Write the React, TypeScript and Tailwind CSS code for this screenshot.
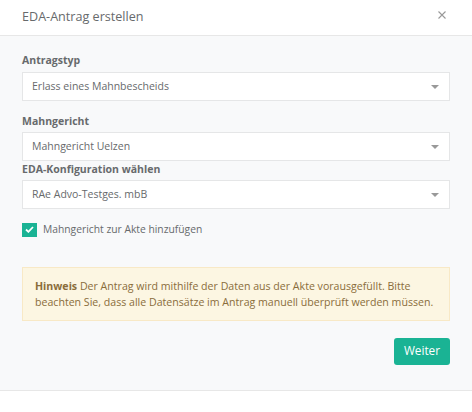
function SelectBox({ value }: { value: string }) {
  return (
    <div className="flex h-[29px] items-center justify-between border border-[#e5e6e7] bg-white pl-[9px] pr-[10px]">
      <span className="text-[10.5px] text-[#676a6c]">{value}</span>
      <svg width="8" height="4" viewBox="0 0 8 4" className="text-[#999]">
        <path d="M0 0h8L4 4z" fill="currentColor" />
      </svg>
    </div>
  );
}

export default function App() {
  return (
    <div className="w-[472px] h-[412px] bg-white font-['Open_Sans',sans-serif]">
      {/* Header */}
      <div className="flex h-9 items-center justify-between border-b border-[#e7e7e7] pl-[22px] pr-[26px]">
        <h1 className="text-[12.6px] text-[#676a6c]">EDA-Antrag erstellen</h1>
        <svg width="8" height="8" viewBox="0 0 8 8" className="mb-[5px] text-[#999]">
          <path d="M0.5 0.5l7 7M7.5 0.5l-7 7" stroke="currentColor" strokeWidth="1.1" />
        </svg>
      </div>

      {/* Body */}
      <div className="border-b border-[#e7e7e7] bg-[#f8f9fa] px-[22px] pt-[17px] pb-[25px]">
        <label className="mb-[5px] block text-[10.5px] leading-[14px] font-bold text-[#676a6c]">Antragstyp</label>
        <SelectBox value="Erlass eines Mahnbescheids" />

        <label className="mt-[13px] mb-[4px] block text-[10.5px] leading-[14px] font-bold text-[#676a6c]">Mahngericht</label>
        <SelectBox value="Mahngericht Uelzen" />

        <label className="mt-[1px] mb-[4px] block text-[10.5px] leading-[14px] font-bold text-[#676a6c]">EDA-Konfiguration wählen</label>
        <SelectBox value="RAe Advo-Testges. mbB" />

        <div className="mt-[13px] flex items-center gap-[6px]">
          <div className="flex h-[14px] w-[15px] items-center justify-center bg-[#1ab394]">
            <svg width="9" height="7" viewBox="0 0 9 7">
              <path d="M1 3.5l2.4 2.3L8 1" fill="none" stroke="white" strokeWidth="1.8" />
            </svg>
          </div>
          <span className="text-[10.3px] text-[#676a6c]">Mahngericht zur Akte hinzufügen</span>
        </div>

        <div className="mt-[30px] border border-[#f8e9c6] bg-[#fcf6e2] pl-[12px] pr-3 pt-[11px] pb-[9px] text-[10.6px] leading-[15.6px] text-[#8a6d3b]">
          <strong>Hinweis</strong> Der Antrag wird mithilfe der Daten aus der Akte vorausgefüllt. Bitte beachten Sie, dass alle Datensätze im Antrag manuell überprüft werden müssen.
        </div>

        <div className="mt-[17px] flex justify-end">
          <button className="h-[27px] w-14 rounded-[3px] bg-[#1ab394] text-[11.8px] text-white">Weiter</button>
        </div>
      </div>
    </div>
  );
}
